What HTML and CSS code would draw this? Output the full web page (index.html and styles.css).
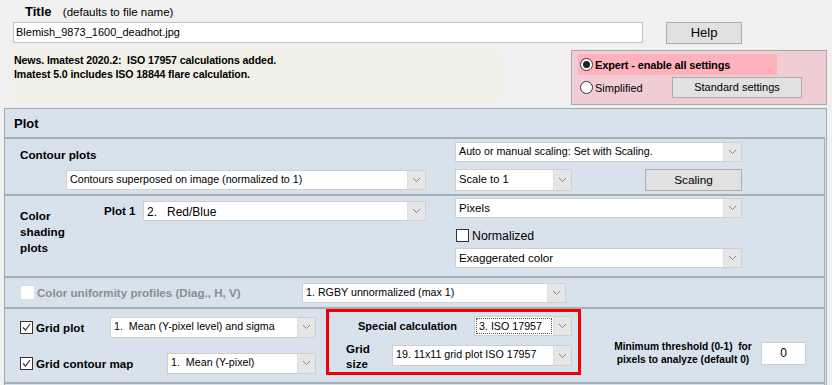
FILE: index.html
```html
<!DOCTYPE html>
<html lang="en-US">
<head>
    <meta name="viewport" content="width=device-width, initial-scale=1.0">
    <link rel="stylesheet" href="styles.css">
    <title>Blemish settings</title>
</head>
<body>

    <div class="title-row"><b>Title</b> <span class="hint">(defaults to file name)</span></div>
    <div class="file-row">
        <div class="text-input">Blemish_9873_1600_deadhot.jpg</div>
        <div class="btn help">Help</div>
    </div>

    <div class="info-row">
        <div class="news">
            News. Imatest 2020.2:&nbsp; ISO 17957 calculations added.<br>
            Imatest 5.0 includes ISO 18844 flare calculation.
        </div>
        <div class="mode-box">
            <div class="mode expert"><span class="radio on"></span>Expert - enable all settings</div>
            <div class="mode simple">
                <span class="radio"></span><span class="simple-label">Simplified</span>
                <div class="btn standard">Standard settings</div>
            </div>
        </div>
    </div>

    <div class="plot-panel">
        <div class="plot-head">Plot</div>

        <!-- contour plots -->
        <div class="section contour">
            <div class="col-left">
                <div class="sec-label">Contour plots</div>
                <div class="select small contour-sel"><span>Contours superposed on image (normalized to 1)</span><i class="arrow"></i></div>
            </div>
            <div class="col-right">
                <div class="select small wide"><span>Auto or manual scaling: Set with Scaling.</span><i class="arrow"></i></div>
                <div class="scale-row">
                    <div class="select scale-sel tall"><span>Scale to 1</span><i class="arrow"></i></div>
                    <div class="btn scaling">Scaling</div>
                </div>
            </div>
        </div>

        <!-- color shading -->
        <div class="section shading">
            <div class="col-left shade-left">
                <div class="sec-label shade-label">Color<br>shading<br>plots</div>
                <div class="plot1">
                    <span class="plot1-label">Plot 1</span>
                    <div class="select plot1-sel"><span>2.&nbsp;&nbsp; Red/Blue</span><i class="arrow"></i></div>
                </div>
            </div>
            <div class="col-right shade-right">
                <div class="select wide"><span>Pixels</span><i class="arrow"></i></div>
                <div class="check-row"><span class="check"></span>Normalized</div>
                <div class="select wide"><span>Exaggerated color</span><i class="arrow"></i></div>
            </div>
        </div>

        <!-- color uniformity -->
        <div class="section uniform">
            <span class="check disabled"></span>
            <span class="uniform-label">Color uniformity profiles (Diag., H, V)</span>
            <div class="select small uniform-sel"><span>1. RGBY unnormalized (max 1)</span><i class="arrow"></i></div>
        </div>

        <!-- grid -->
        <div class="section grid-sec">
            <div class="grid-left">
                <div class="grid-row">
                    <div class="grid-label gp"><span class="check ticked"></span>Grid plot</div>
                    <div class="select small gp-sel"><span>1.&nbsp; Mean (Y-pixel level) and sigma</span><i class="arrow"></i></div>
                </div>
                <div class="grid-row second">
                    <div class="grid-label gc"><span class="check ticked"></span>Grid contour map</div>
                    <div class="select small gc-sel"><span>1.&nbsp; Mean (Y-pixel)</span><i class="arrow"></i></div>
                </div>
            </div>
            <div class="special">
                <div class="special-row">
                    <span class="special-label">Special calculation</span>
                    <div class="select small special-sel"><span class="focused">3. ISO 17957</span><i class="arrow"></i></div>
                </div>
                <div class="special-row size-row">
                    <span class="size-label">Grid<br>size</span>
                    <div class="select small size-sel"><span>19. 11x11 grid plot ISO 17957</span><i class="arrow"></i></div>
                </div>
            </div>
            <div class="threshold">
                <div class="thr-label">Minimum threshold (0-1)&nbsp; for<br>pixels to analyze (default 0)</div>
                <div class="num-input">0</div>
            </div>
        </div>

        <div class="section next"></div>
    </div>

</body>
</html>
```

FILE: styles.css
```css
* {box-sizing: border-box;}

body {
    margin: 0;
    background-color: #f0f0f0;
    font-family: "Liberation Sans", Arial, sans-serif;
    font-size: 12px;
    color: #000;
    overflow: hidden;
}

/* top part */
.title-row {
    padding: 4px 0 0 25px;
    height: 22px;
    line-height: 16px;
}
.title-row b {
    font-size: 13px;
}
.hint {
    margin-left: 8px;
    font-size: 11.5px;
}

.file-row {
    display: flex;
    margin-left: 13px;
}
.text-input {
    width: 630px;
    height: 21px;
    background: white;
    border: 1px solid #c2c2c2;
    padding: 3px 0 0 2px;
    font-size: 11px;
}

.btn {
    background-color: #e1e1e1;
    border: 1px solid #adadad;
    text-align: center;
    font-size: 12px;
}
.help {
    margin-left: 23px;
    width: 76px;
    height: 22px;
    line-height: 20px;
    font-size: 13px;
}

.info-row {
    display: flex;
    margin: 6px 0 0 13px;
}
.news {
    width: 487px;
    height: 51px;
    background-color: #f0f0e6;
    padding: 3px 0 0 1px;
    font-size: 10.6px;
    letter-spacing: -0.1px;
    font-weight: bold;
    line-height: 14px;
}
.mode-box {
    margin-left: 71px;
    width: 256px;
    height: 55px;
    background-color: #f0ccd4;
    border: 1px solid #a8a8a8;
    padding: 3px 0 0 6px;
}
.mode {
    display: flex;
    align-items: center;
    font-size: 11px;
}
.expert {
    width: 199px;
    height: 21px;
    background-color: #ffb1be;
    font-weight: bold;
    letter-spacing: -0.15px;
}
.simple {
    margin-top: 2px;
    height: 21px;
}
.radio {
    width: 13px;
    height: 13px;
    border: 1px solid #333;
    border-radius: 50%;
    background: white;
    margin: 0 2px 0 2px;
    position: relative;
}
.radio.on::after {
    content: "";
    position: absolute;
    left: 2px;
    top: 2px;
    width: 7px;
    height: 7px;
    border-radius: 50%;
    background: #222;
}
.simple-label {
    width: 77px;
    font-size: 11px;
}
.standard {
    width: 130px;
    height: 21px;
    line-height: 19px;
    font-size: 11px;
}

/* plot panel */
.plot-panel {
    margin: 3px 0 0 4px;
    width: 823px;
    background-color: #d8e2ed;
    border: 1px solid #a3aab2;
    border-bottom: none;
}
.plot-head {
    height: 28px;
    padding: 7px 0 0 9px;
    font-size: 13px;
    font-weight: bold;
}
.section {
    margin-right: 1px;
    border-top: 2px solid #a7aeb6;
    border-right: 1px solid #a7aeb6;
    display: flex;
}
.col-left {
    width: 450px;
}
.sec-label {
    font-size: 11.7px;
    font-weight: bold;
    line-height: 16px;
}

.select {
    display: flex;
    height: 20px;
    background: white;
    border: 1px solid #cfcfcf;
    font-size: 11.6px;
}
.select span {
    flex: 1;
    padding: 2px 0 0 3px;
    white-space: nowrap;
    overflow: hidden;
}
.select.small {
    font-size: 10.7px;
}
.arrow {
    width: 18px;
    background: #e6e6e6 url("data:image/svg+xml;utf8,<svg xmlns='http://www.w3.org/2000/svg' width='9' height='6'><path d='M1 1l3.5 3.5L8 1' fill='none' stroke='%23888' stroke-width='1'/></svg>") no-repeat center;
    border-left: 1px solid #dedede;
}
.tall {
    height: 22px;
}
.wide {
    width: 287px;
}

/* contour */
.contour {
    height: 57px;
}
.contour .col-left {
    padding: 8px 0 0 15px;
}
.contour-sel {
    margin: 7px 0 0 46px;
    width: 360px;
}
.contour .col-right {
    padding-top: 3px;
}
.scale-row {
    display: flex;
    margin-top: 7px;
}
.scale-sel {
    width: 117px;
    font-size: 11.2px;
}
.scale-sel span {
    padding-top: 3px;
}
.scaling {
    margin-left: 73px;
    width: 97px;
    height: 22px;
    line-height: 20px;
    font-size: 11.8px;
}

/* shading */
.shading {
    height: 82px;
}
.shade-left {
    display: flex;
}
.shade-label {
    width: 99px;
    padding: 12px 0 0 15px;
    line-height: 16px;
}
.plot1 {
    display: flex;
    margin-top: 5px;
    height: 20px;
    line-height: 20px;
}
.plot1-label {
    font-size: 11.6px;
    font-weight: bold;
    width: 39px;
}
.plot1-sel {
    width: 283px;
    font-size: 12px;
}
.plot1-sel span {
    padding-top: 0;
}
.shade-right {
    padding-top: 2px;
}
.check-row {
    display: flex;
    align-items: center;
    height: 17px;
    margin: 9px 0 4px 1px;
    font-size: 12.3px;
}
.check {
    display: inline-block;
    width: 13px;
    height: 13px;
    background: white;
    border: 1px solid #333;
    margin-right: 3px;
}
.check.ticked {
    background: white url("data:image/svg+xml;utf8,<svg xmlns='http://www.w3.org/2000/svg' width='11' height='11'><path d='M2 5.5l2.5 2.5 4.5-6' fill='none' stroke='%23333' stroke-width='1.2'/></svg>") no-repeat center;
}
.check.disabled {
    border-color: #dedede;
    width: 15px;
    height: 15px;
    margin-right: 2px;
}

/* uniformity */
.uniform {
    height: 31px;
    align-items: center;
    padding-left: 15px;
}
.uniform-label {
    font-size: 11.6px;
    font-weight: bold;
    color: #8c8c8c;
    width: 265px;
}
.uniform-sel {
    width: 264px;
    font-size: 10.5px;
}

/* grid */
.grid-sec {
    height: 75px;
}
.grid-left {
    width: 321px;
    padding: 7px 0 0 15px;
}
.grid-row {
    display: flex;
    align-items: center;
    height: 22px;
}
.grid-row.second {
    margin-top: 14px;
}
.grid-label {
    display: flex;
    align-items: center;
    font-size: 11.6px;
    font-weight: bold;
}
.gp {
    width: 90px;
}
.gc {
    width: 147px;
}
.gp-sel {
    width: 206px;
    height: 21px;
}
.gc-sel {
    width: 149px;
    height: 21px;
}

.special {
    width: 255px;
    height: 66px;
    border: 3px solid #f00000;
    padding-top: 3px;
}
.special-row {
    display: flex;
    align-items: center;
    height: 21px;
}
.special-label {
    font-size: 11px;
    font-weight: bold;
    margin-left: 29px;
    width: 116px;
}
.special-sel {
    width: 98px;
    font-size: 10.5px;
}
.special-sel .focused {
    margin: 1px;
    padding: 1px 0 0 2px;
    border: 1px dotted #555;
}
.size-row {
    margin-top: 9px;
}
.size-label {
    font-size: 11.6px;
    font-weight: bold;
    line-height: 15px;
    margin-left: 17px;
    width: 46px;
}
.size-sel {
    width: 180px;
    height: 21px;
    font-size: 10.5px;
}

.threshold {
    display: flex;
    align-items: center;
    margin: 32px 0 0 28px;
    height: 24px;
}
.thr-label {
    width: 148px;
    font-size: 10.2px;
    font-weight: bold;
    line-height: 13px;
    text-align: center;
    white-space: nowrap;
}
.num-input {
    margin-left: 4px;
    width: 45px;
    height: 23px;
    background: white;
    border: 1px solid #cfcfcf;
    text-align: center;
    line-height: 21px;
}

.next {
    height: 20px;
}
```
